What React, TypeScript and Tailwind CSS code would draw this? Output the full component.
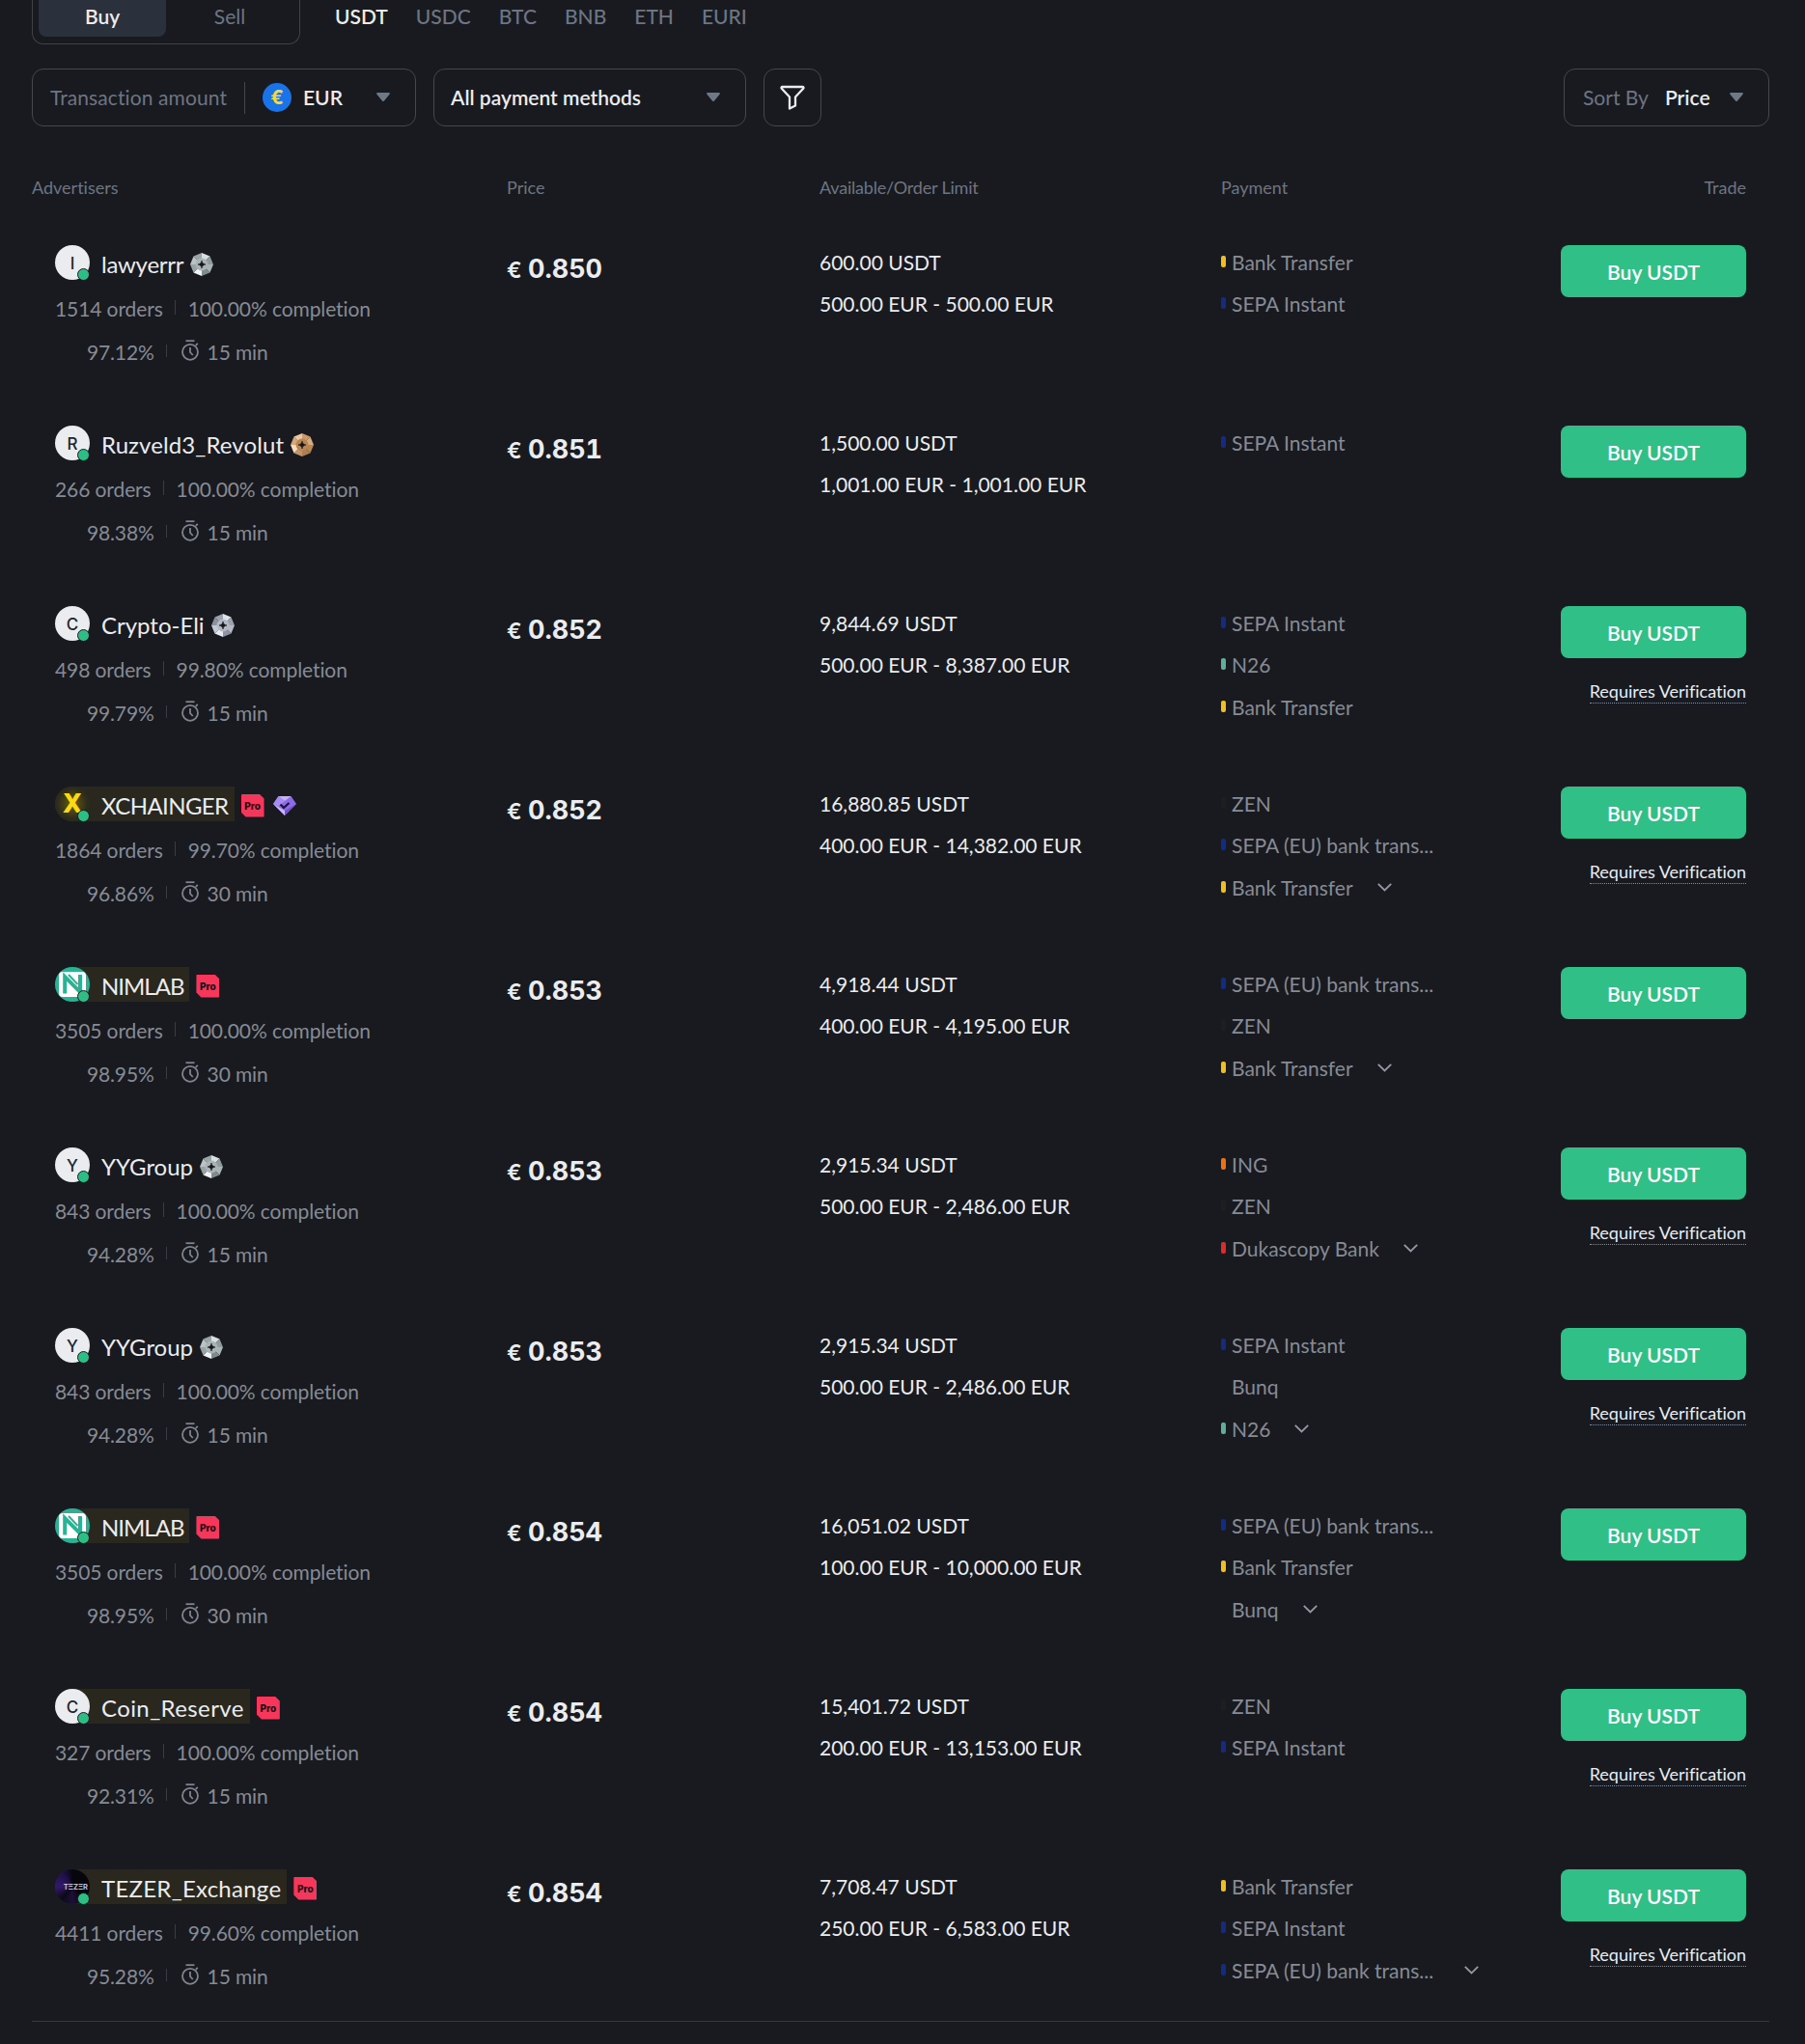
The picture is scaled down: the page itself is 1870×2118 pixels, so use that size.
type Method = "bank" | "sepa" | "sepaEu" | "n26" | "zen" | "ing" | "dukascopy" | "bunq";

type Tier = "silver" | "steel" | "bronze";

interface Offer {
  name: string;
  tracking?: string;
  avatar: "letter" | "xchainger" | "nimlab" | "tezer";
  tier?: Tier;
  pro?: boolean;
  diamond?: boolean;
  orders: string;
  completion: string;
  rating: string;
  minutes: number;
  price: string;
  available: string;
  limit: string;
  methods: Method[];
  more?: boolean;
  verify?: boolean;
}

const METHODS: Record<Method, { label: string; bar: string }> = {
  bank: { label: "Bank Transfer", bar: "bg-[#f0bf1f]" },
  sepa: { label: "SEPA Instant", bar: "bg-[#152a80]" },
  sepaEu: { label: "SEPA (EU) bank trans...", bar: "bg-[#112c85]" },
  n26: { label: "N26", bar: "bg-[#5fae9c]" },
  zen: { label: "ZEN", bar: "bg-[#1d1e1f]" },
  ing: { label: "ING", bar: "bg-[#f0700f]" },
  dukascopy: { label: "Dukascopy Bank", bar: "bg-[#e02a2a]" },
  bunq: { label: "Bunq", bar: "bg-transparent" },
};

const OFFERS: Offer[] = [
  { name: "lawyerrr", tracking: "tracking-[-0.25px]", avatar: "letter", tier: "silver", orders: "1514", completion: "100.00%", rating: "97.12%", minutes: 15, price: "0.850", available: "600.00", limit: "500.00 EUR - 500.00 EUR", methods: ["bank", "sepa"] },
  { name: "Ruzveld3_Revolut", tracking: "tracking-[0.1px]", avatar: "letter", tier: "bronze", orders: "266", completion: "100.00%", rating: "98.38%", minutes: 15, price: "0.851", available: "1,500.00", limit: "1,001.00 EUR - 1,001.00 EUR", methods: ["sepa"] },
  { name: "Crypto-Eli", avatar: "letter", tier: "steel", orders: "498", completion: "99.80%", rating: "99.79%", minutes: 15, price: "0.852", available: "9,844.69", limit: "500.00 EUR - 8,387.00 EUR", methods: ["sepa", "n26", "bank"], verify: true },
  { name: "XCHAINGER", tracking: "tracking-[-0.6px]", avatar: "xchainger", pro: true, diamond: true, orders: "1864", completion: "99.70%", rating: "96.86%", minutes: 30, price: "0.852", available: "16,880.85", limit: "400.00 EUR - 14,382.00 EUR", methods: ["zen", "sepaEu", "bank"], more: true, verify: true },
  { name: "NIMLAB", tracking: "tracking-[-1px]", avatar: "nimlab", pro: true, orders: "3505", completion: "100.00%", rating: "98.95%", minutes: 30, price: "0.853", available: "4,918.44", limit: "400.00 EUR - 4,195.00 EUR", methods: ["sepaEu", "zen", "bank"], more: true },
  { name: "YYGroup", avatar: "letter", tier: "silver", orders: "843", completion: "100.00%", rating: "94.28%", minutes: 15, price: "0.853", available: "2,915.34", limit: "500.00 EUR - 2,486.00 EUR", methods: ["ing", "zen", "dukascopy"], more: true, verify: true },
  { name: "YYGroup", avatar: "letter", tier: "silver", orders: "843", completion: "100.00%", rating: "94.28%", minutes: 15, price: "0.853", available: "2,915.34", limit: "500.00 EUR - 2,486.00 EUR", methods: ["sepa", "bunq", "n26"], more: true, verify: true },
  { name: "NIMLAB", tracking: "tracking-[-1px]", avatar: "nimlab", pro: true, orders: "3505", completion: "100.00%", rating: "98.95%", minutes: 30, price: "0.854", available: "16,051.02", limit: "100.00 EUR - 10,000.00 EUR", methods: ["sepaEu", "bank", "bunq"], more: true },
  { name: "Coin_Reserve", tracking: "tracking-[0.4px]", avatar: "letter", pro: true, orders: "327", completion: "100.00%", rating: "92.31%", minutes: 15, price: "0.854", available: "15,401.72", limit: "200.00 EUR - 13,153.00 EUR", methods: ["zen", "sepa"], verify: true },
  { name: "TEZER_Exchange", tracking: "tracking-[0.25px]", avatar: "tezer", pro: true, orders: "4411", completion: "99.60%", rating: "95.28%", minutes: 15, price: "0.854", available: "7,708.47", limit: "250.00 EUR - 6,583.00 EUR", methods: ["bank", "sepa", "sepaEu"], more: true, verify: true },
];

const COINS = ["USDT", "USDC", "BTC", "BNB", "ETH", "EURI"];

const TIER_COLORS: Record<Tier, string[]> = {
  silver: ["#d9dfe0", "#8f9b9e", "#aab4b6", "#7f8b8e", "#f1f4f4", "#98a3a6", "#b9c2c4", "#9aa5a8"],
  steel: ["#dfe3ea", "#9ba1ad", "#b4b9c4", "#8d93a0", "#e6eaf2", "#c3c9d6", "#8a909c", "#9ca2ae"],
  bronze: ["#c99a6c", "#d9ac7d", "#b98655", "#b07f4e", "#c4956a", "#f6dcc0", "#d6a878", "#ecc9a0"],
};

function Caret() {
  return (
    <svg className="mb-0.5 h-[9px] w-[14px] shrink-0" viewBox="0 0 14 9">
      <path d="M1.2 0h11.6c.9 0 1.4 1 .8 1.7L8 8.5a1.3 1.3 0 0 1-2 0L.4 1.7C-.2 1 .3 0 1.2 0Z" fill="#6f7885" />
    </svg>
  );
}

function TierBadge({ tier }: { tier: Tier }) {
  const c = TIER_COLORS[tier];
  const pts = [[12, 0], [20.5, 3.5], [24, 12], [20.5, 20.5], [12, 24], [3.5, 20.5], [0, 12], [3.5, 3.5]];
  return (
    <svg className="h-6 w-6 shrink-0" viewBox="0 0 24 24">
      {pts.map((p, i) => {
        const n = pts[(i + 1) % 8];
        return <polygon key={i} points={`12,12 ${p[0]},${p[1]} ${n[0]},${n[1]}`} fill={c[i]} />;
      })}
      <circle cx="12" cy="12" r="6.5" fill={c[2]} />
      <path d="M12 8c.5 2.6 1.4 3.5 4 4-2.6.5-3.5 1.4-4 4-.5-2.6-1.4-3.5-4-4 2.6-.5 3.5-1.4 4-4Z" fill="#15171c" stroke="#15171c" strokeWidth=".6" />
    </svg>
  );
}

function ProBadge() {
  return (
    <span className="flex h-6 w-6 shrink-0 items-center justify-center rounded-[1px] bg-[#f6365b] [clip-path:polygon(0_0,79%_0,100%_21%,100%_100%,21%_100%,0_79%)]">
      <span className="font-['Inter',sans-serif] text-[10px] font-extrabold leading-none text-[#1c0d14]">Pro</span>
    </span>
  );
}

function DiamondBadge() {
  return (
    <svg className="h-5 w-6 shrink-0" viewBox="0 0 24 20">
      <path d="M5.5 0h13L24 8 12 20 0 8Z" fill="#8d6be8" />
      <path d="M5.5 0h13L12 5Z" fill="#c5b0fa" />
      <path d="M5.5 0 0 8l5.5 2.5L12 5Z" fill="#a88cf3" />
      <path d="M0 8l12 12V15Z" fill="#c9b8fb" />
      <path d="M24 8 12 20V15Z" fill="#7451cf" />
      <path d="m7.5 8.5 3.5 3.5 5.5-5" fill="none" stroke="#1a1430" strokeWidth="2.2" />
    </svg>
  );
}

function Timer() {
  return (
    <svg className="h-[22px] w-5 shrink-0" viewBox="0 0 20 22" fill="none" stroke="#7f858f" strokeWidth="1.8">
      <path d="M5.5 1.2h9" />
      <circle cx="10" cy="12.8" r="8" />
      <path d="M10 8v5l2.8 3M15.8 5.8l2-2" />
    </svg>
  );
}

function Avatar({ offer }: { offer: Offer }) {
  return (
    <span className="relative h-9 w-9 shrink-0">
      {offer.avatar === "letter" && (
        <span className="flex h-9 w-9 items-center justify-center rounded-full bg-[#eaecef] pt-1 font-['Inter',sans-serif] text-[17px] font-medium text-[#202630]">
          {offer.name[0] === "l" ? "I" : offer.name[0]}
        </span>
      )}
      {offer.avatar === "xchainger" && (
        <span className="flex h-9 w-9 items-center justify-center rounded-full bg-[radial-gradient(circle,#6b5f10_0%,#2e2c1c_60%,#26251f_100%)] font-['Inter',sans-serif] text-[27px] font-extrabold text-[#fbd913]">
          X
        </span>
      )}
      {offer.avatar === "nimlab" && (
        <svg className="h-9 w-9" viewBox="0 0 36 36">
          <circle cx="18" cy="18" r="18" fill="#2bb294" />
          <path d="M4 9q0-4 4-4h20q4 0 4 4v18q0 4-4 4H8q-4 0-4-4Z" fill="#fff" />
          <path d="M10.2 27.5V10L26 26V8" fill="none" stroke="#2bb294" strokeWidth="4" />
          <path d="M14 8l9.5 10" fill="none" stroke="#2bb294" strokeWidth="2" />
        </svg>
      )}
      {offer.avatar === "tezer" && (
        <span className="flex h-9 w-9 items-center justify-end overflow-hidden rounded-full bg-[conic-gradient(from_0deg,#07060c_0_36%,#1c1038_50%,#0c0a16_62%,#33196b_75%,#20104a_90%,#07060c_100%)] pr-0.5 pt-0.5">
          <span className="font-['Inter',sans-serif] text-[7.5px] font-bold leading-none text-[#c3bfca]">TΞZΞR</span>
        </span>
      )}
      <span className="absolute -bottom-px right-0 h-[13px] w-[13px] rounded-full border border-[#181a20] bg-[#2ebd85]" />
    </span>
  );
}

function Advertiser({ offer }: { offer: Offer }) {
  return (
    <div className="w-[492px] pl-6">
      <div className="flex h-9 items-center">
        <div className={`mr-[7px] flex h-9 items-center rounded-l-full rounded-r ${offer.pro ? "bg-[#29271e] pr-1.5" : ""}`}>
          <Avatar offer={offer} />
          <span className={`ml-3 pt-1 text-[24px] leading-8 text-[#eaecef] ${offer.tracking ?? ""}`}>{offer.name}</span>
        </div>
        <div className="flex items-center gap-[9px] pt-[3px]">
          {offer.tier && <TierBadge tier={offer.tier} />}
          {offer.pro && <ProBadge />}
          {offer.diamond && <DiamondBadge />}
        </div>
      </div>
      <div className="mt-[15px] flex h-[30px] items-center text-[21px] leading-[30px] tracking-[-0.1px] text-[#868b94]">
        <span>{offer.orders} orders</span>
        <span className="ml-3 mr-[13px] mb-1 h-[15px] w-px bg-[#373c45]" />
        <span>{offer.completion} completion</span>
      </div>
      <div className="mt-[15px] flex h-[30px] items-center pl-[33px] text-[21px] leading-[30px] tracking-[-0.15px] text-[#868b94]">
        <span>{offer.rating}</span>
        <span className="mx-3 mb-1 h-[13px] w-px bg-[#373c45]" />
        <span className="mb-1 ml-0.5">
          <Timer />
        </span>
        <span className="ml-2">{offer.minutes} min</span>
      </div>
    </div>
  );
}

function OfferRow({ offer }: { offer: Offer }) {
  return (
    <div className="flex h-[187px] items-start">
      <Advertiser offer={offer} />
      <div className="flex w-[324px] items-baseline pt-[7px] font-['Inter',sans-serif] font-bold leading-9 text-[#eaecef]">
        <span className="mr-1.5 w-4 text-[23px] font-semibold">€</span>
        <span className="text-[27px] tabular-nums">{offer.price}</span>
      </div>
      <div className="w-[416px] pt-[3px] text-[21px] leading-[30px] text-[#eaecef]">
        <div>{offer.available} USDT</div>
        <div className="mt-[13px]">{offer.limit}</div>
      </div>
      <div className="flex w-[352px] flex-col gap-[13px] pt-[3px] text-[21px] leading-[30px] text-[#868b94]">
        {offer.methods.map((m, i) => (
          <div key={m} className={`flex h-[30px] items-center ${i === 2 ? "mt-px" : ""}`}>
            <span className={`mb-0.5 mr-1.5 h-3 w-[5px] rounded-[2px] ${METHODS[m].bar}`} />
            <span>{METHODS[m].label}</span>
            {offer.more && i === offer.methods.length - 1 && (
              <svg className={`mb-0.5 h-[9px] w-[15px] ${m === "sepaEu" ? "ml-8" : "ml-[25px]"}`} viewBox="0 0 15 9" fill="none" stroke="#9298a1" strokeWidth="1.9">
                <path d="m.8.8 6.7 6.7L14.2.8" />
              </svg>
            )}
          </div>
        ))}
      </div>
      <div className="flex w-[192px] flex-col items-end">
        <button className="flex h-[54px] w-48 items-center justify-center rounded-lg bg-[#2fbf87] pt-0.5 text-[21px] font-semibold text-white">
          Buy USDT
        </button>
        {offer.verify && (
          <span className="mt-[22px] border-b border-dotted border-[#848e9c] text-[18px] leading-6 text-[#eaecef]">
            Requires Verification
          </span>
        )}
      </div>
    </div>
  );
}

function Toolbar() {
  return (
    <>
      <div className="flex h-[46px] items-start">
        <div className="flex h-[46px] w-[278px] rounded-b-xl border border-t-0 border-[#3f4247] px-1.5 text-[21px]">
          <div className="flex h-[38px] w-[132px] justify-center rounded-b-lg bg-[#2a303c] pt-px font-semibold leading-8 text-[#eaecef]">Buy</div>
          <div className="flex h-[38px] w-[132px] justify-center pt-px leading-8 text-[#6d7582]">Sell</div>
        </div>
        <div className="ml-9 flex gap-[29px] pt-px text-[21px] leading-8">
          {COINS.map((coin, i) => (
            <span key={coin} className={i === 0 ? "font-semibold text-[#eaecef]" : "font-medium text-[#6d7582]"}>
              {coin}
            </span>
          ))}
        </div>
      </div>
      <div className="mt-[25px] flex h-[60px] text-[21px]">
        <div className="flex w-[398px] items-center rounded-xl border border-[#44474b] pl-[18px]">
          <span className="w-[201px] tracking-[0.1px] text-[#6d7582]">Transaction amount</span>
          <span className="h-[33px] w-px bg-[#44474b]" />
          <span className="ml-[18px] flex h-[30px] w-[30px] items-center justify-center rounded-full bg-[#1a73e8] font-['Inter',sans-serif] text-[20px] font-bold leading-none text-[#f5d83a]">
            €
          </span>
          <span className="ml-3 mr-[35px] font-semibold text-[#eaecef]">EUR</span>
          <Caret />
        </div>
        <div className="ml-[18px] flex w-[324px] items-center justify-between rounded-xl border border-[#44474b] pl-[17px] pr-[26px]">
          <span className="font-semibold text-[#eaecef]">All payment methods</span>
          <Caret />
        </div>
        <div className="ml-[18px] flex w-[60px] items-center justify-center rounded-xl border border-[#44474b]">
          <svg className="h-7 w-7" viewBox="0 0 28 28" fill="none" stroke="#eaecef" strokeWidth="2.3" strokeLinejoin="round">
            <path d="M3.6 3h20.8c1 0 1.5 1 .8 1.8L17 13.5v9l-6 3V13.5L2.8 4.8C2.1 4 2.6 3 3.6 3Z" />
          </svg>
        </div>
        <div className="ml-auto flex w-[213px] items-center rounded-xl border border-[#44474b] pl-[19px]">
          <span className="text-[#6d7582]">Sort By</span>
          <span className="ml-[17px] mr-5 font-semibold text-[#eaecef]">Price</span>
          <Caret />
        </div>
      </div>
    </>
  );
}

export default function App() {
  return (
    <div className="h-[2118px] w-[1870px] overflow-hidden bg-[#181a20] pl-[33px] pr-[37px] font-['Lato','Open_Sans',sans-serif] [font-variant-ligatures:none]">
      <Toolbar />
      <div className="mt-[51px] flex h-6 pr-6 text-[18px] leading-6 text-[#6d7582]">
        <span className="w-[492px]">Advertisers</span>
        <span className="w-[324px]">Price</span>
        <span className="w-[416px] tracking-[-0.2px]">Available/Order Limit</span>
        <span>Payment</span>
        <span className="ml-auto">Trade</span>
      </div>
      <div className="mt-12">
        {OFFERS.map((offer, i) => (
          <OfferRow key={i} offer={offer} />
        ))}
      </div>
      <div className="-mt-[30px] h-px bg-[#36393e]" />
    </div>
  );
}
